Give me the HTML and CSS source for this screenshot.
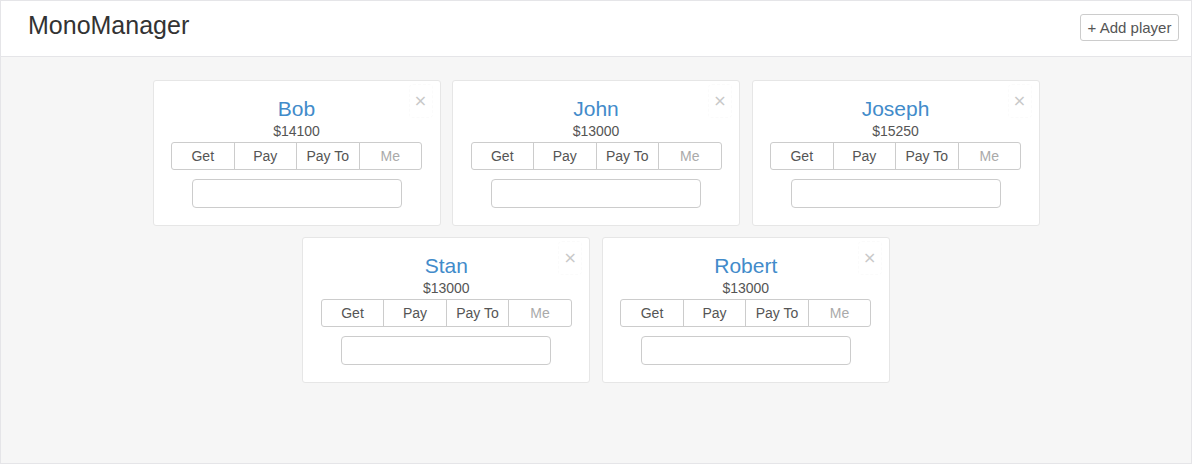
FILE: index.html
```html
<!DOCTYPE html>
<html>
<head>
<meta charset="utf-8">
<title>MonoManager</title>
<link rel="stylesheet" href="styles.css">
</head>
<body>
<div class="app">
  <header class="topbar">
    <h1 class="brand">MonoManager</h1>
    <button class="add-btn">+ Add player</button>
  </header>
  <main class="players">
    <div class="card">
      <button class="close">×</button>
      <div class="name">Bob</div>
      <div class="money">$14100</div>
      <div class="btn-group">
        <button class="gbtn">Get</button><button class="gbtn">Pay</button><button class="gbtn">Pay To</button><button class="gbtn disabled">Me</button>
      </div>
      <input class="amount" type="text">
    </div>
    <div class="card">
      <button class="close">×</button>
      <div class="name">John</div>
      <div class="money">$13000</div>
      <div class="btn-group">
        <button class="gbtn">Get</button><button class="gbtn">Pay</button><button class="gbtn">Pay To</button><button class="gbtn disabled">Me</button>
      </div>
      <input class="amount" type="text">
    </div>
    <div class="card">
      <button class="close">×</button>
      <div class="name">Joseph</div>
      <div class="money">$15250</div>
      <div class="btn-group">
        <button class="gbtn">Get</button><button class="gbtn">Pay</button><button class="gbtn">Pay To</button><button class="gbtn disabled">Me</button>
      </div>
      <input class="amount" type="text">
    </div>
    <div class="card">
      <button class="close">×</button>
      <div class="name">Stan</div>
      <div class="money">$13000</div>
      <div class="btn-group">
        <button class="gbtn">Get</button><button class="gbtn">Pay</button><button class="gbtn">Pay To</button><button class="gbtn disabled">Me</button>
      </div>
      <input class="amount" type="text">
    </div>
    <div class="card">
      <button class="close">×</button>
      <div class="name">Robert</div>
      <div class="money">$13000</div>
      <div class="btn-group">
        <button class="gbtn">Get</button><button class="gbtn">Pay</button><button class="gbtn">Pay To</button><button class="gbtn disabled">Me</button>
      </div>
      <input class="amount" type="text">
    </div>
  </main>
</div>
</body>
</html>
```
FILE: styles.css
```css
* { box-sizing: border-box; }
html, body { margin: 0; padding: 0; }
body {
  font-family: "Liberation Sans", Arial, sans-serif;
  color: #333;
  background: #f6f6f6;
}
.app {
  width: 1192px;
  height: 464px;
  border: 1px solid #e5e5e8;
  background: #f6f6f6;
  display: flex;
  flex-direction: column;
}
.topbar {
  height: 56px;
  flex: none;
  background: #fff;
  border-bottom: 1px solid #e5e5e8;
  display: flex;
  align-items: center;
  justify-content: space-between;
  padding: 0 12px 0 27px;
}
.brand {
  margin: 0;
  font-size: 25px;
  font-weight: normal;
  color: #333;
  line-height: 1;
  padding-bottom: 6px;
}
.add-btn {
  font-family: inherit;
  font-size: 15px;
  color: #555;
  background: #fff;
  border: 1px solid #ccc;
  border-radius: 3px;
  height: 27px;
  width: 99px;
  padding: 0;
  margin-bottom: 3px;
}
.players {
  display: flex;
  flex-wrap: wrap;
  justify-content: center;
  align-content: flex-start;
  row-gap: 11px;
  column-gap: 11.5px;
  padding: 23px 150px 0 150px;
}
.card {
  position: relative;
  width: 288px;
  height: 146px;
  background: #fff;
  border: 1px solid #e6e6e6;
  border-radius: 3px;
  display: flex;
  flex-direction: column;
  align-items: center;
  padding-top: 16px;
}
.close {
  appearance: none;
  position: absolute;
  top: 3px;
  right: 7px;
  width: 24px;
  height: 34px;
  border: 1px dashed #fbfbfb;
  border-radius: 4px;
  background: transparent;
  color: #c8c8c8;
  font-family: "DejaVu Sans", sans-serif;
  font-size: 16px;
  line-height: 1;
  padding: 0;
}
.name {
  font-size: 21px;
  line-height: 24px;
  color: #428bca;
}
.money {
  font-size: 14px;
  line-height: 17px;
  margin-top: 2px;
  color: #555;
}
.btn-group {
  display: flex;
  width: 251px;
  height: 28px;
  margin-top: 2px;
}
.gbtn {
  flex: 1;
  font-family: inherit;
  font-size: 14px;
  color: #555;
  background: #fff;
  border: 1px solid #ccc;
  margin-left: -1px;
  padding: 0;
}
.gbtn:first-child { margin-left: 0; border-radius: 3px 0 0 3px; }
.gbtn:last-child { border-radius: 0 3px 3px 0; }
.gbtn.disabled { color: #aaa; }
.amount {
  margin-top: 9px;
  width: 210px;
  height: 29px;
  border: 1px solid #ccc;
  border-radius: 4px;
  background: #fff;
}
```
